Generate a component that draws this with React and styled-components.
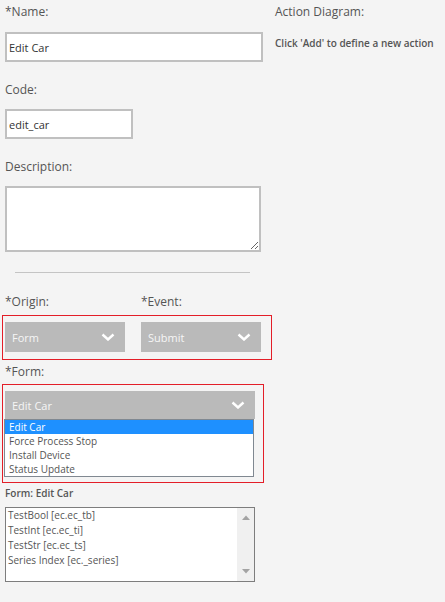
import React from "react";
import styled, { createGlobalStyle } from "styled-components";

const Global = createGlobalStyle`
  html, body { margin: 0; padding: 0; background: #f4f4f4; }
  body { font-family: "Open Sans", "Liberation Sans", sans-serif; color: #555; }
  * { box-sizing: border-box; }
`;

const Page = styled.div`
  display: grid;
  grid-template-columns: 265px 1fr;
  column-gap: 5px;
  padding: 4px 0 0 5px;
  width: 445px;
  height: 602px;
  overflow: hidden;
`;

const Left = styled.div`
  display: flex;
  flex-direction: column;
`;

const Right = styled.div`
  display: flex;
  flex-direction: column;
`;

const Label = styled.div`
  font-size: 12px;
  line-height: 16px;
  color: #555;
  margin-bottom: ${(p) => p.$mb ?? 12}px;
`;

const Hint = styled.div`
  font-size: 10px;
  font-weight: 600;
  line-height: 14px;
  color: #555;
  margin-top: 16px;
`;

const Group = styled.div`
  display: flex;
  flex-direction: column;
  margin-bottom: 20px;
`;

const TextInput = styled.input`
  width: ${(p) => p.$w}px;
  height: 30px;
  border: 2px solid #c0c0c0;
  background: #fff;
  font-family: "Open Sans", "Liberation Sans", sans-serif;
  font-size: 11px;
  color: #333;
  padding: 0 2px;
  outline: none;
`;

const TextArea = styled.textarea`
  width: 256px;
  height: 66px;
  border: 2px solid #c0c0c0;
  background: #fff;
  font-family: "Open Sans", "Liberation Sans", sans-serif;
  font-size: 11px;
  margin: 0;
  display: block;
  outline: none;
`;

const Divider = styled.hr`
  width: 235px;
  margin: 0 0 21px 10px;
  border: none;
  border-top: 1px solid #c4c4c4;
  height: 0;
`;

const Row = styled.div`
  display: flex;
  gap: ${(p) => p.$gap ?? 0}px;
`;

const Col = styled.div`
  display: flex;
  flex-direction: column;
  width: ${(p) => p.$w}px;
`;

const RedBox = styled.div`
  border: 1px solid #e31e28;
  width: ${(p) => p.$w}px;
  margin-left: -3px;
  padding: ${(p) => p.$pad};
  display: flex;
  flex-direction: ${(p) => p.$dir || "row"};
  gap: ${(p) => p.$gap ?? 0}px;
  margin-bottom: ${(p) => p.$mb ?? 0}px;
`;

const Select = styled.div`
  width: ${(p) => p.$w}px;
  height: ${(p) => p.$h}px;
  background: #bababa;
  color: #f6f6f6;
  font-size: 11px;
  display: flex;
  align-items: center;
  justify-content: space-between;
  padding: 0 10px 0 7px;
`;

const DropList = styled.div`
  width: 250px;
  margin-left: -1px;
  border: 1px solid #808891;
  background: #fff;
  display: flex;
  flex-direction: column;
`;

const Option = styled.div`
  height: 14px;
  line-height: 14px;
  font-size: 10px;
  padding-left: 4px;
  color: ${(p) => (p.$active ? "#fff" : "#555")};
  background: ${(p) => (p.$active ? "#1e90ff" : "transparent")};
`;

const SubTitle = styled.div`
  font-size: 10px;
  font-weight: 600;
  line-height: 14px;
  color: #555;
  margin: 3px 0 7px;
`;

const ListBox = styled.div`
  width: 250px;
  height: 75px;
  border: 1px solid #7d7d7d;
  background: #fff;
  display: flex;
`;

const Items = styled.div`
  flex: 1;
  display: flex;
  flex-direction: column;
  padding: 0 0 0 2px;
`;

const Item = styled.div`
  font-size: 10px;
  line-height: 15px;
  color: #555;
`;

const ScrollBar = styled.div`
  width: 17px;
  background: #f0f0f0;
  display: flex;
  flex-direction: column;
  justify-content: space-between;
  align-items: center;
  padding: 7px 0 7px;
`;

const Chevron = () => (
  <svg width="14" height="8" viewBox="0 0 14 8">
    <polyline points="1.5,1.5 7,6.5 12.5,1.5" fill="none" stroke="#fff" strokeWidth="2.4" />
  </svg>
);

const Arrow = ({ up }) => (
  <svg width="8" height="5" viewBox="0 0 8 5">
    <polygon points={up ? "0,5 4,0.5 8,5" : "0,0 4,4.5 8,0"} fill="#a3a3a3" />
  </svg>
);

export default function App() {
  return (
    <>
      <Global />
      <Page>
        <Left>
          <Group>
            <Label>*Name:</Label>
            <TextInput $w={258} readOnly defaultValue="Edit Car" />
          </Group>
          <Group>
            <Label $mb={11}>Code:</Label>
            <TextInput $w={128} readOnly defaultValue="edit_car" />
          </Group>
          <Group>
            <Label $mb={11}>Description:</Label>
            <TextArea readOnly defaultValue="" />
          </Group>
          <Divider />
          <Row $gap={16}>
            <Col $w={120}><Label $mb={5}>*Origin:</Label></Col>
            <Col $w={120}><Label $mb={5}>*Event:</Label></Col>
          </Row>
          <RedBox $w={270} $pad="6px 0 7px 2px" $gap={16} $mb={4}>
            <Select $w={120} $h={30}>
              <span>Form</span>
              <Chevron />
            </Select>
            <Select $w={120} $h={30}>
              <span>Submit</span>
              <Chevron />
            </Select>
          </RedBox>
          <Label $mb={4}>*Form:</Label>
          <RedBox $w={262} $pad="6px 0 5px 2px" $dir="column">
            <Select $w={250} $h={28}>
              <span>Edit Car</span>
              <Chevron />
            </Select>
            <DropList>
              <Option $active>Edit Car</Option>
              <Option>Force Process Stop</Option>
              <Option>Install Device</Option>
              <Option>Status Update</Option>
            </DropList>
          </RedBox>
          <SubTitle>Form: Edit Car</SubTitle>
          <ListBox>
            <Items>
              <Item>TestBool [ec.ec_tb]</Item>
              <Item>TestInt [ec.ec_ti]</Item>
              <Item>TestStr [ec.ec_ts]</Item>
              <Item>Series Index [ec._series]</Item>
            </Items>
            <ScrollBar>
              <Arrow up />
              <Arrow />
            </ScrollBar>
          </ListBox>
        </Left>
        <Right>
          <Label $mb={0}>Action Diagram:</Label>
          <Hint>Click 'Add' to define a new action</Hint>
        </Right>
      </Page>
    </>
  );
}
